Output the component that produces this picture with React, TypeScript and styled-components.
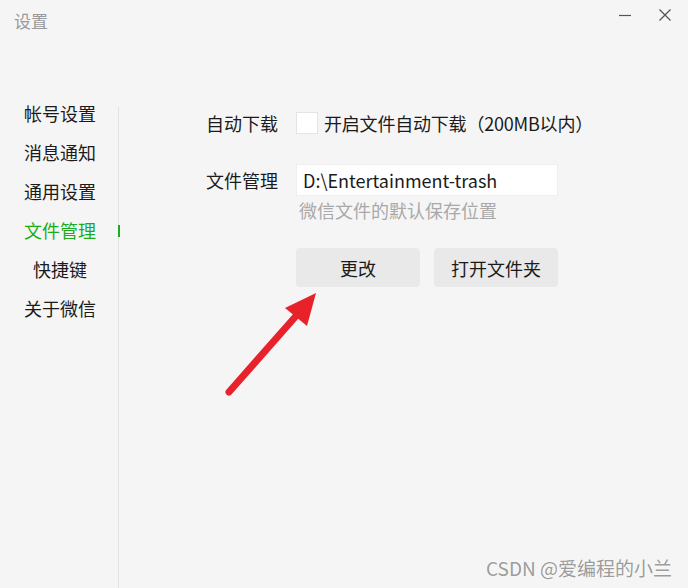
import React from "react"
import styled, { createGlobalStyle } from "styled-components"

const Global = createGlobalStyle`
  html, body {
    margin: 0;
    padding: 0;
    background: #f5f5f5;
  }
  * {
    box-sizing: border-box;
  }
`

const FONT = `"Noto Sans CJK SC", "Noto Sans", sans-serif`

const Window = styled.div`
  position: relative;
  width: 688px;
  height: 588px;
  background: #f5f5f5;
  font-family: ${FONT};
  display: flex;
  flex-direction: column;
  overflow: hidden;
`

const TitleBar = styled.div`
  height: 40px;
  display: flex;
  align-items: center;
  padding: 0 14px;
  justify-content: space-between;
`

const Title = styled.span`
  font-size: 17px;
  color: #9a9a9a;
`

const Controls = styled.div`
  display: flex;
  align-items: center;
  gap: 26px;
  margin-right: 2px;
  margin-top: -10px;
`

const CtrlButton = styled.div`
  width: 14px;
  height: 14px;
  display: flex;
  align-items: center;
  justify-content: center;
  color: #555;
`

const Body = styled.div`
  flex: 1;
  display: flex;
  margin-top: 54px;
`

const Nav = styled.ul`
  list-style: none;
  margin: 0;
  padding: 0 0 0 24px;
  width: 118px;
`

const NavItem = styled.li<{ $active?: boolean }>`
  position: relative;
  width: 72px;
  height: 39px;
  line-height: 39px;
  text-align: center;
  font-size: 18px;
  color: ${(p) => (p.$active ? "#1aad19" : "#1b1b1b")};

  &::after {
    content: "";
    display: ${(p) => (p.$active ? "block" : "none")};
    position: absolute;
    left: 94px;
    top: 14px;
    width: 2px;
    height: 12px;
    background: #1aad19;
  }
`

const Divider = styled.div`
  width: 1px;
  margin-top: 13px;
  background: #e2e2e2;
`

const Content = styled.div`
  flex: 1;
  padding: 13px 0 0 87px;
  display: flex;
  flex-direction: column;
`

const Row = styled.div<{ $gap?: number }>`
  display: flex;
  align-items: center;
  height: 32px;
  margin-top: ${(p) => p.$gap ?? 0}px;
`

const Label = styled.span`
  width: 90px;
  font-size: 18px;
  color: #1b1b1b;
`

const Checkbox = styled.span`
  width: 22px;
  height: 22px;
  background: #fff;
  border: 1px solid #e4e4e4;
  margin-right: 6px;
`

const Text = styled.span`
  font-size: 18px;
  color: #1b1b1b;
  letter-spacing: -0.2px;
`

const Input = styled.div`
  width: 262px;
  height: 32px;
  background: #fff;
  border: 1px solid #efefef;
  padding-left: 6px;
  display: flex;
  align-items: center;
  font-size: 18px;
  color: #1b1b1b;
`

const Hint = styled.div`
  margin: 2px 0 0 93px;
  height: 24px;
  line-height: 24px;
  font-size: 18px;
  color: #a9a9a9;
`

const Buttons = styled.div`
  display: flex;
  gap: 14px;
  margin: 26px 0 0 90px;
`

const Button = styled.div`
  width: 124px;
  height: 39px;
  border-radius: 4px;
  background: #e9e9e9;
  display: flex;
  align-items: center;
  justify-content: center;
  font-size: 18px;
  color: #1b1b1b;
`

const Arrow = styled.svg`
  position: absolute;
  left: 220px;
  top: 285px;
`

const Watermark = styled.div`
  position: absolute;
  right: 16px;
  bottom: 7px;
  font-size: 19px;
  color: #9c9c9c;
  text-shadow: 0 0 2px #fff;
`

const navItems = ["帐号设置", "消息通知", "通用设置", "文件管理", "快捷键", "关于微信"]

export default function App() {
  return (
    <Window>
      <Global />
      <TitleBar>
        <Title>设置</Title>
        <Controls>
          <CtrlButton>
            <svg width="14" height="14" viewBox="0 0 14 14">
              <line x1="1" y1="7.5" x2="13" y2="7.5" stroke="#555" strokeWidth="1.2" />
            </svg>
          </CtrlButton>
          <CtrlButton>
            <svg width="14" height="14" viewBox="0 0 14 14">
              <path d="M1.5 1.5 L12.5 12.5 M12.5 1.5 L1.5 12.5" stroke="#555" strokeWidth="1.3" />
            </svg>
          </CtrlButton>
        </Controls>
      </TitleBar>
      <Body>
        <Nav>
          {navItems.map((n) => (
            <NavItem key={n} $active={n === "文件管理"}>
              {n}
            </NavItem>
          ))}
        </Nav>
        <Divider />
        <Content>
          <Row>
            <Label>自动下载</Label>
            <Checkbox />
            <Text>开启文件自动下载（200MB以内）</Text>
          </Row>
          <Row $gap={25}>
            <Label>文件管理</Label>
            <Input>D:\Entertainment-trash</Input>
          </Row>
          <Hint>微信文件的默认保存位置</Hint>
          <Buttons>
            <Button>更改</Button>
            <Button>打开文件夹</Button>
          </Buttons>
        </Content>
      </Body>
      <Arrow width="110" height="120" viewBox="0 0 110 120">
        <line x1="9" y1="107" x2="76" y2="31" stroke="#e8222b" strokeWidth="7" strokeLinecap="round" />
        <polygon points="96,8 65,23 87,41" fill="#e8222b" />
      </Arrow>
      <Watermark>CSDN @爱编程的小兰</Watermark>
    </Window>
  )
}
